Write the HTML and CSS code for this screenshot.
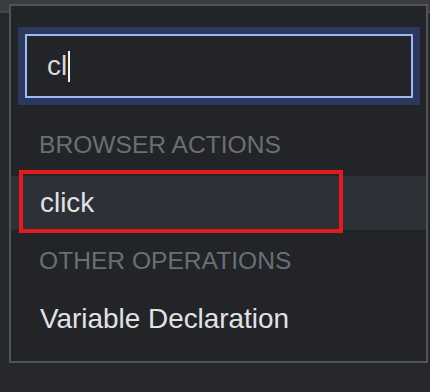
FILE: index.html
```html
<!DOCTYPE html>
<html lang="en">
<head>
    <meta charset="UTF-8">
    <meta name="viewport" content="width=device-width, initial-scale=1.0">
    <title>Command Palette</title>
    <link rel="stylesheet" href="styles.css">
</head>
<body>
    <div class="topbar"></div>

    <div class="palette">
        <div class="search-ring">
            <div class="search-field">
                <span class="search-text">cl</span><span class="caret"></span>
            </div>
        </div>

        <div class="results">
            <div class="group-title">BROWSER ACTIONS</div>
            <div class="result active">
                click
                <div class="annotation"></div>
            </div>
            <div class="group-title">OTHER OPERATIONS</div>
            <div class="result">Variable Declaration</div>
        </div>
    </div>
</body>
</html>
```

FILE: styles.css
```css
body {
    margin: 0;
    height: 392px;
    background-color: #26282c;
    font-family: "Liberation Sans", Arial, sans-serif;
    overflow: hidden;
}
.topbar {
    height: 11px;
    background-color: #3a3c41;
    border-bottom: 2px solid #44464b;
}
.palette {
    position: absolute;
    top: 4px;
    left: 9px;
    width: 415px;
    background-color: #232428;
    border: 2px solid #505357;
}
.search-ring {
    margin: 21px 6px 0 7px;
    padding: 7px;
    background-color: #2c395c;
}
.search-field {
    display: flex;
    align-items: center;
    height: 60px;
    padding-left: 20px;
    border: 2px solid #9db8f6;
    background-color: #232428;
}
.search-text {
    font-size: 27.9px;
    color: #d9dadd;
}
.caret {
    width: 2px;
    height: 31px;
    margin-left: 1px;
    background-color: #eeeeee;
}
.results {
    padding: 9px 0 15px;
}
.group-title {
    height: 62px;
    line-height: 62px;
    padding-left: 28px;
    font-size: 24.6px;
    color: #6a6f76;
}
.result {
    position: relative;
    height: 54px;
    line-height: 54px;
    padding-left: 29px;
    font-size: 27.9px;
    color: #e1e2e5;
}
.result.active {
    background-color: #2d3036;
}
.annotation {
    position: absolute;
    left: 8px;
    top: -6px;
    width: 324px;
    height: 63px;
    box-sizing: border-box;
    border: 4px solid #e21b1f;
}
```
